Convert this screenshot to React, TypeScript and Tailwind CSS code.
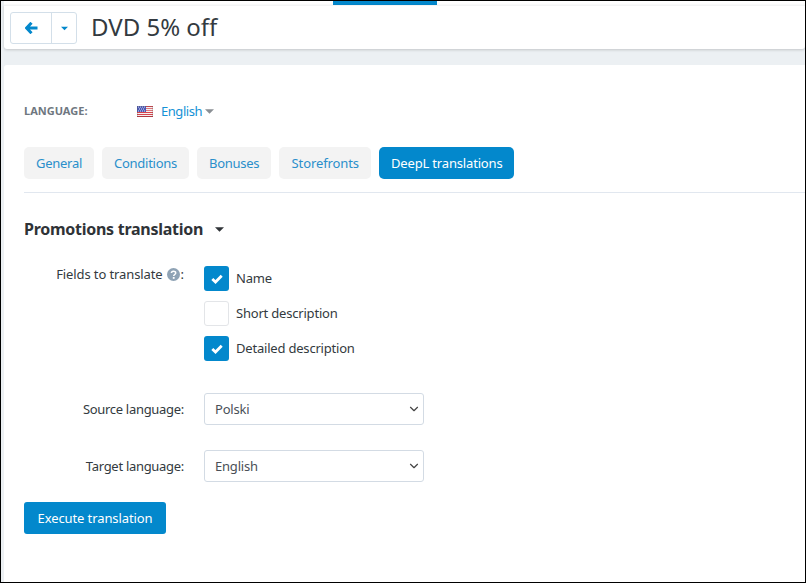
import { ChevronDown } from "lucide-react"

function Caret({ className }: { className: string }) {
  return (
    <svg className={className} width="10" height="5" viewBox="0 0 10 5">
      <path d="M0 0h10L5 5z" fill="currentColor" />
    </svg>
  )
}

function Flag() {
  return (
    <svg width="16" height="11" viewBox="0 0 16 11" className="shrink-0">
      <rect width="16" height="11" fill="#f4f0ee" />
      <rect y="0" width="16" height="1" fill="#d9434e" />
      <rect y="2" width="16" height="1" fill="#e0737a" />
      <rect y="4" width="16" height="1" fill="#e0737a" />
      <rect y="6" width="16" height="1" fill="#d9434e" />
      <rect y="8" width="16" height="1" fill="#d9434e" />
      <rect y="10" width="16" height="1" fill="#c9303c" />
      <rect width="9" height="6" fill="#4a58b5" />
      <path d="M1 1h1M3 1h1M5 1h1M7 1h1M2 3h1M4 3h1M6 3h1M1 5h1M3 5h1M5 5h1M7 5h1" stroke="#dfe3f5" strokeWidth="1" />
      <rect x="0.25" y="0.25" width="15.5" height="10.5" fill="none" stroke="#555" strokeOpacity="0.45" strokeWidth="0.5" />
    </svg>
  )
}

function Check({ label, checked }: { label: string; checked: boolean }) {
  return (
    <div className="flex items-center gap-[7px]">
      <div
        className={
          checked
            ? "w-[25px] h-[25px] rounded-[3px] bg-[#0388cc] flex items-center justify-center"
            : "w-[25px] h-[25px] rounded-[3px] bg-white border border-[#e3e5e8]"
        }
      >
        {checked && (
          <svg width="12" height="10" viewBox="0 0 12 10">
            <path d="M1.3 5l3.2 3 6.2-6.2" fill="none" stroke="white" strokeWidth="2.8" />
          </svg>
        )}
      </div>
      <span>{label}</span>
    </div>
  )
}

function SelectRow({ label, value, className }: { label: string; value: string; className: string }) {
  return (
    <div className={"flex items-center " + className}>
      <label className="w-[160px] text-right tracking-[-0.3px] pt-[1px]">{label}</label>
      <div className="relative ml-[20px] w-[220px] h-[32px]">
        <select
          defaultValue={value}
          className="appearance-none w-full h-full bg-white border border-[#d3dbe4] rounded-[3px] pl-[10px] pt-[1px] text-[#4a4f57] outline-none"
        >
          <option>{value}</option>
        </select>
        <ChevronDown className="absolute right-[3px] top-[9px] text-[#444] pointer-events-none" size={14} strokeWidth={2} />
      </div>
    </div>
  )
}

export default function App() {
  const tabs = ["General", "Conditions", "Bonuses"]
  return (
    <div className="w-[806px] h-[583px] border-t border-l border-r border-b border-black bg-[#ecf0f3] pl-[3px] flex flex-col overflow-hidden text-[13px] tracking-[-0.2px] text-[#333a40] font-['Noto_Sans',sans-serif]">
      <div className="h-[4px] bg-white shrink-0">
        <div className="ml-[329px] w-[104px] h-full bg-[#0388cc]" />
      </div>
      <div className="h-[44px] shrink-0 bg-white border-t border-[#f3f4f5] rounded-b-[3px] shadow-[0_1px_3px_rgba(0,0,0,0.18)] flex items-center pl-[6px] pt-[1px]">
        <div className="flex w-[67px] h-[32px] border border-[#d3dfe9] rounded-[3px]">
          <div className="w-[41px] border-r border-[#d3dfe9] flex items-center justify-center text-[#0388cc]">
            <svg width="13" height="12" viewBox="0 0 13 12">
              <path d="M6.5 0.8L1.6 6l4.9 5.2M2.5 6h10" fill="none" stroke="currentColor" strokeWidth="3" />
            </svg>
          </div>
          <div className="flex-1 flex items-center justify-center">
            <Caret className="text-[#0388cc] w-[7px]" />
          </div>
        </div>
        <h1 className="ml-[14px] text-[24px] leading-none tracking-normal text-[#333a40] pb-[3px]">DVD 5% off</h1>
      </div>
      <div className="h-[16px] shrink-0" />
      <div className="flex-1 bg-white rounded-tl-[3px] pt-[38px] pl-[20px]">
        <div className="flex items-center h-[16px]">
          <span className="w-[113px] text-[11px] font-bold uppercase tracking-normal text-[#6f7780]">Language:</span>
          <Flag />
          <span className="ml-[8px] pt-[1px] tracking-[-0.45px] text-[#1592d6]">English</span>
          <Caret className="ml-[3px] text-[#8a8f94] w-[9px]" />
        </div>
        <div className="mt-[28px] flex gap-[8px] pb-[13px] border-b border-[#e1e7ef]">
          {tabs.map((t) => (
            <div key={t} className="h-[32px] px-[12px] pt-[1px] flex items-center bg-[#f3f3f3] rounded-[5px] text-[#2a8fcb] tracking-[-0.27px]">
              {t}
            </div>
          ))}
          <div className="h-[32px] w-[92px] pt-[1px] flex items-center justify-center bg-[#f3f3f3] rounded-[5px] text-[#2a8fcb] tracking-[-0.1px]">
            Storefronts
          </div>
          <div className="h-[32px] w-[135px] pt-[1px] flex items-center justify-center bg-[#0388cc] rounded-[5px] text-white tracking-[-0.17px]">
            DeepL translations
          </div>
        </div>
        <div className="mt-[25px] flex items-center h-[22px] text-[16px] font-bold tracking-[-0.27px] text-[#2f3337]">
          Promotions translation
          <Caret className="ml-[12px] text-[#2f3337] w-[9px]" />
        </div>
        <div className="mt-[26px] flex">
          <div className="w-[160px] text-right leading-[16px] flex justify-end items-start h-[20px] tracking-[-0.1px]">
            Fields to translate
            <svg width="13" height="13" viewBox="0 0 13 13" className="ml-[4px] mt-[2px]">
              <circle cx="6.5" cy="6.5" r="6.5" fill="#8fa3b5" />
              <path d="M4.4 5.1c0-2.6 4.3-2.6 4.3-.1 0 1.5-2 1.5-2 3" fill="none" stroke="white" strokeWidth="1.5" />
              <rect x="5.8" y="9" width="1.8" height="1.8" fill="white" />
            </svg>
            <span className="ml-[1px]">:</span>
          </div>
          <div className="ml-[20px] flex flex-col gap-[10px]">
            <Check label="Name" checked />
            <Check label="Short description" checked={false} />
            <Check label="Detailed description" checked />
          </div>
        </div>
        <SelectRow label="Source language:" value="Polski" className="mt-[32px]" />
        <SelectRow label="Target language:" value="English" className="mt-[25px]" />
        <button className="mt-[20px] w-[142px] h-[32px] pt-[1px] bg-[#0388cc] rounded-[3px] text-white tracking-[-0.1px]">Execute translation</button>
      </div>
    </div>
  )
}
